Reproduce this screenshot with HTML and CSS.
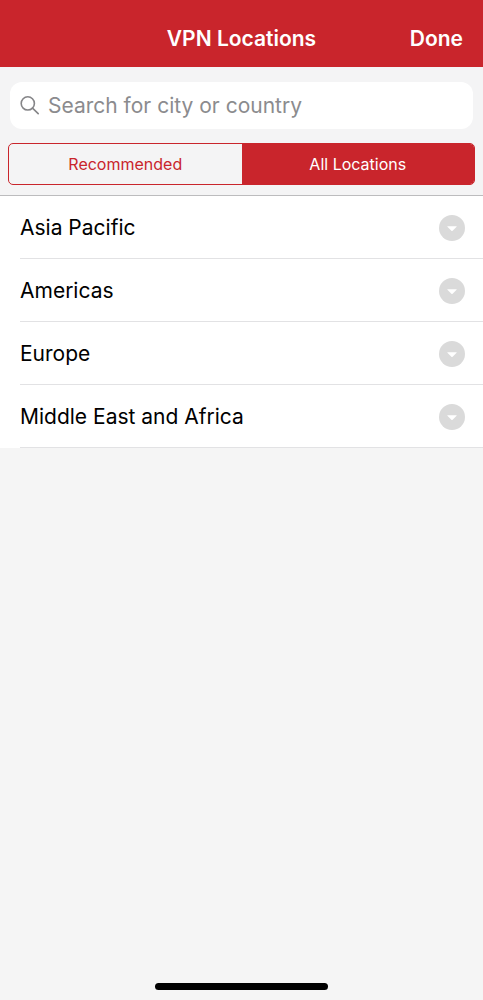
FILE: index.html
```html
<!DOCTYPE html>
<html lang="en">
<head>
<meta charset="utf-8">
<meta name="viewport" content="width=device-width, initial-scale=1">
<title>VPN Locations</title>
<link rel="stylesheet" href="styles.css">
</head>
<body>
<div class="screen">
  <header class="navbar">
    <h1 class="navbar-title">VPN Locations</h1>
    <button class="navbar-done" type="button">Done</button>
  </header>
  <div class="filters">
    <label class="search">
      <svg class="search-icon" viewBox="0 0 20 20" aria-hidden="true"><circle cx="7.8" cy="7.4" r="6.6"/><path d="M12.5 12.1 18.2 17.6"/></svg>
      <input class="search-input" type="search" placeholder="Search for city or country" aria-label="Search for city or country">
    </label>
    <div class="segments">
      <button class="segment" type="button" aria-pressed="false">Recommended</button>
      <button class="segment segment-active" type="button" aria-pressed="true">All Locations</button>
    </div>
  </div>
  <main>
    <ul class="regions">
      <li><button class="region" type="button"><span>Asia Pacific</span><svg class="chevron" viewBox="0 0 26 26" aria-hidden="true"><circle cx="13" cy="13" r="13"/><path d="M8.6 11.2h8.8q.7 0 .2.6l-4 4q-.6.6-1.2 0l-4-4q-.5-.6.2-.6z"/></svg></button></li>
      <li><button class="region" type="button"><span>Americas</span><svg class="chevron" viewBox="0 0 26 26" aria-hidden="true"><circle cx="13" cy="13" r="13"/><path d="M8.6 11.2h8.8q.7 0 .2.6l-4 4q-.6.6-1.2 0l-4-4q-.5-.6.2-.6z"/></svg></button></li>
      <li><button class="region" type="button"><span>Europe</span><svg class="chevron" viewBox="0 0 26 26" aria-hidden="true"><circle cx="13" cy="13" r="13"/><path d="M8.6 11.2h8.8q.7 0 .2.6l-4 4q-.6.6-1.2 0l-4-4q-.5-.6.2-.6z"/></svg></button></li>
      <li><button class="region" type="button"><span>Middle East and Africa</span><svg class="chevron" viewBox="0 0 26 26" aria-hidden="true"><circle cx="13" cy="13" r="13"/><path d="M8.6 11.2h8.8q.7 0 .2.6l-4 4q-.6.6-1.2 0l-4-4q-.5-.6.2-.6z"/></svg></button></li>
    </ul>
  </main>
  <div class="home-indicator"></div>
</div>
</body>
</html>
```
FILE: styles.css
```css
* {
  box-sizing: border-box;
}

body {
  margin: 0;
  background: #f5f5f5;
  color: #000;
  font-family: Inter, Roboto, sans-serif;
}

button,
input {
  font: inherit;
}

.screen {
  display: flex;
  flex-direction: column;
  min-height: 100vh;
}

.navbar {
  display: grid;
  grid-template-columns: 1fr auto 1fr;
  align-items: center;
  padding: 25px 20px 14px;
  background: #c9252c;
  color: #fff;
  font-size: 21px;
  line-height: 28px;
}

.navbar-title {
  grid-column: 2;
  margin: 0;
  font-size: inherit;
  font-weight: 600;
}

.navbar-done {
  justify-self: end;
  padding: 0;
  border: 0;
  background: none;
  color: inherit;
  font-weight: 600;
}

.filters {
  display: flex;
  flex-direction: column;
  gap: 14px;
  padding: 15px 8px 10px;
  border-bottom: 1px solid #bcbcbe;
  background: #f4f4f5;
}

.search {
  display: flex;
  align-items: center;
  gap: 8px;
  height: 47px;
  margin: 0 2px;
  padding: 0 10px;
  border-radius: 12px;
  background: #fff;
}

.search-icon {
  flex: none;
  width: 20px;
  height: 20px;
  fill: none;
  stroke: #858588;
  stroke-width: 1.6;
  stroke-linecap: round;
}

.search-input {
  flex: 1;
  min-width: 0;
  padding: 0;
  border: 0;
  outline: 0;
  background: none;
  font-size: 21px;
  line-height: 28px;
}

.search-input::placeholder {
  color: #8b8b8e;
  opacity: 1;
}

.segments {
  display: grid;
  grid-template-columns: 1fr 1fr;
  overflow: hidden;
  height: 42px;
  border: 1px solid #c9252c;
  border-radius: 5px;
}

.segment {
  padding: 0;
  border: 0;
  background: none;
  color: #c9252c;
  font-size: 16px;
}

.segment-active {
  background: #c9252c;
  color: #fff;
}

.regions {
  margin: 0;
  padding: 0;
  list-style: none;
  background: #fff;
}

.region {
  display: flex;
  align-items: center;
  justify-content: space-between;
  width: 100%;
  height: 63px;
  padding: 0 18px 0 20px;
  border: 0;
  background: linear-gradient(#e2e2e4, #e2e2e4) 20px 100% / 100% 1px no-repeat;
  color: #000;
  font-size: 21px;
  text-align: left;
}

.chevron {
  flex: none;
  width: 26px;
  height: 26px;
  fill: #dadada;
}

.chevron path {
  fill: #fff;
}

.home-indicator {
  width: 36%;
  height: 7px;
  margin: auto auto 10px;
  border-radius: 4px;
  background: #000;
}
```
